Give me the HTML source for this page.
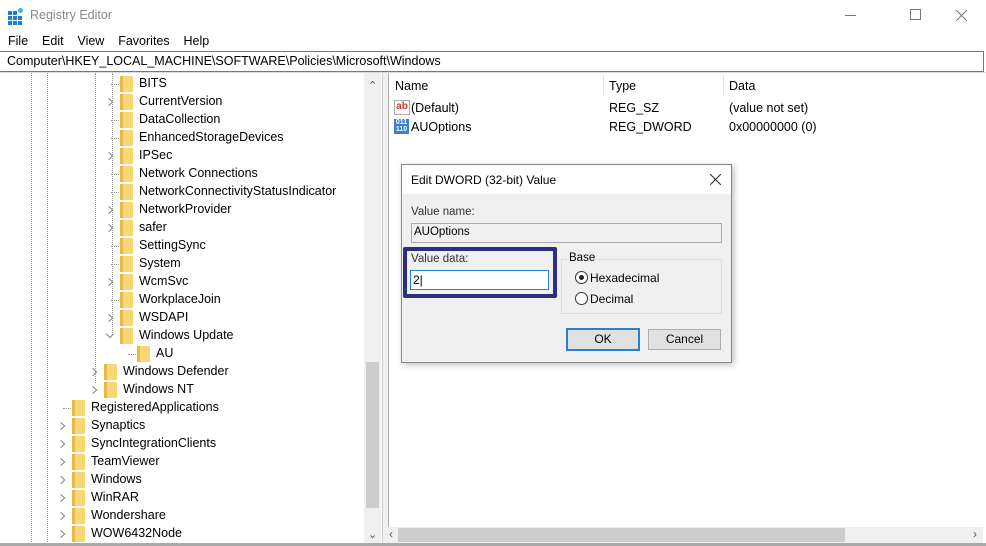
<!DOCTYPE html><html><head><style>
body{margin:0;width:986px;height:546px;overflow:hidden;background:#fff;font-family:"Liberation Sans",sans-serif;font-size:12px;color:#000;position:relative}
.a{position:absolute;white-space:nowrap}
.f{position:absolute;width:13px;height:16px;background:#f8d775;border-radius:1px}
.f:before{content:"";position:absolute;left:0;top:0;width:3px;height:16px;background:#e6b94a}
.ch{position:absolute;width:5px;height:5px;border-right:1.3px solid #888;border-bottom:1.3px solid #888;transform:rotate(-45deg)}
.chd{transform:rotate(45deg)}
.vd{position:absolute;border-left:1px dotted #999;width:0}
.hd{position:absolute;border-top:1px dotted #999;height:0;width:8px}
</style></head><body>
<div class="a" style="left:8px;top:8px;width:16px;height:16px">
<div style="position:absolute;left:0;top:3px;width:4px;height:4px;background:#1e7fd0;box-shadow:5px 0 #1e7fd0,0 5px #1e7fd0,5px 5px #1e7fd0,10px 5px #1e7fd0,0 10px #1e7fd0,5px 10px #1e7fd0,10px 10px #1e7fd0"></div>
<div style="position:absolute;left:10px;top:0;width:5px;height:5px;background:#3fb0f0;border-radius:50%"></div></div>
<div class="a" style="left:30px;top:8px;font-size:12.5px;color:#888">Registry Editor</div>
<div class="a" style="left:845px;top:15px;width:11px;border-top:1px solid #777"></div>
<div class="a" style="left:910px;top:9px;width:9px;height:9px;border:1px solid #777"></div>
<svg class="a" style="left:956px;top:10px" width="11" height="11"><path d="M0 0L11 11M11 0L0 11" stroke="#777" stroke-width="1"/></svg>
<div class="a" style="left:8px;top:34px;font-size:12.5px">File&nbsp;&nbsp;&nbsp;&nbsp;Edit&nbsp;&nbsp;&nbsp;&nbsp;View&nbsp;&nbsp;&nbsp;&nbsp;Favorites&nbsp;&nbsp;&nbsp;&nbsp;Help</div>
<div class="a" style="left:0;top:51px;width:983px;height:19px;border:1px solid #777;border-left:none"></div>
<div class="a" style="left:7px;top:54px;font-size:12.5px">Computer\HKEY_LOCAL_MACHINE\SOFTWARE\Policies\Microsoft\Windows</div>
<div class="a" style="left:0;top:72px;width:986px;border-top:1px solid #ddd"></div>
<div class="vd" style="left:31px;top:73px;height:473px"></div>
<div class="vd" style="left:47px;top:73px;height:473px"></div>
<div class="vd" style="left:95px;top:73px;height:310px"></div>
<div class="vd" style="left:112px;top:73px;height:262px"></div>
<div id="tree"></div>
<div class="a" style="left:364px;top:73px;width:17px;height:473px;background:#f0f0f0"></div>
<div class="a" style="left:366px;top:362px;width:13px;height:146px;background:#cdcdcd"></div>
<div class="a" style="left:368px;top:79px;font-size:11px;color:#555">⌃</div>
<div class="a" style="left:368px;top:528px;font-size:11px;color:#555">⌄</div>
<div class="a" style="left:382px;top:73px;width:5px;height:473px;background:#f0f0f0;border-left:1px solid #ccc;border-right:1px solid #aaa"></div>
<div class="a" style="left:395px;top:79px;font-size:12.5px">Name</div>
<div class="a" style="left:603px;top:75px;height:20px;border-left:1px solid #e5e5e5"></div>
<div class="a" style="left:609px;top:79px;font-size:12.5px">Type</div>
<div class="a" style="left:723px;top:75px;height:20px;border-left:1px solid #e5e5e5"></div>
<div class="a" style="left:729px;top:79px;font-size:12.5px">Data</div>
<div class="a" style="left:394px;top:100px;width:14px;height:13px;border:1px solid #aaa;background:#fff;color:#c33;font-size:10px;font-weight:bold;line-height:12px;text-align:center">ab</div>
<div class="a" style="left:411px;top:101px;font-size:12.5px">(Default)</div>
<div class="a" style="left:609px;top:101px;font-size:12.5px">REG_SZ</div>
<div class="a" style="left:729px;top:101px;font-size:12.5px">(value not set)</div>
<div class="a" style="left:394px;top:119px;width:15px;height:15px;background:#3a7fd0;color:#fff;font-size:7px;line-height:7px;text-align:center;font-weight:bold">011<br>110</div>
<div class="a" style="left:411px;top:120px;font-size:12.5px">AUOptions</div>
<div class="a" style="left:609px;top:120px;font-size:12.5px">REG_DWORD</div>
<div class="a" style="left:729px;top:120px;font-size:12.5px">0x00000000 (0)</div>
<div class="a" style="left:386px;top:527px;width:597px;height:16px;background:#f0f0f0"></div>
<div class="a" style="left:398px;top:528px;width:447px;height:14px;background:#cdcdcd"></div>
<div class="a" style="left:389px;top:527px;font-size:12px;color:#555">‹</div>
<div class="a" style="left:973px;top:527px;font-size:12px;color:#555">›</div>
<div class="a" style="left:0;top:543px;width:986px;height:3px;background:#aaa"></div>
<div class="a" style="left:401px;top:164px;width:329px;height:197px;border:1px solid #888;background:#f0f0f0;box-shadow:2px 2px 6px rgba(0,0,0,.25)"></div>
<div class="a" style="left:402px;top:165px;width:329px;height:29px;background:#fff"></div>
<div class="a" style="left:411px;top:173px;font-size:12px">Edit DWORD (32-bit) Value</div>
<svg class="a" style="left:710px;top:174px" width="11" height="11"><path d="M0 0L11 11M11 0L0 11" stroke="#333" stroke-width="1.1"/></svg>
<div class="a" style="left:411px;top:206px;font-size:11.5px;color:#333">Value name:</div>
<div class="a" style="left:411px;top:223px;width:309px;height:18px;border:1px solid #aaa;background:#f0f0f0"></div>
<div class="a" style="left:414px;top:226px;font-size:11.5px">AUOptions</div>
<div class="a" style="left:403px;top:247px;width:146px;height:43px;border:4px solid #2b2f7e;border-radius:2px"></div>
<div class="a" style="left:411px;top:253px;font-size:11.5px;color:#333">Value data:</div>
<div class="a" style="left:410px;top:270px;width:137px;height:18px;border:1px solid #2a7fd0;background:#fff"></div>
<div class="a" style="left:413px;top:273px;font-size:12px">2|</div>
<div class="a" style="left:561px;top:259px;width:159px;height:53px;border:1px solid #ddd"></div>
<div class="a" style="left:568px;top:252px;font-size:11.5px;background:#f0f0f0;padding:0 1px">Base</div>
<div class="a" style="left:575px;top:271px;width:11px;height:11px;border:1px solid #333;border-radius:50%;background:#fff"></div>
<div class="a" style="left:579px;top:275px;width:5px;height:5px;border-radius:50%;background:#222"></div>
<div class="a" style="left:590px;top:271px;font-size:12px">Hexadecimal</div>
<div class="a" style="left:575px;top:292px;width:11px;height:11px;border:1px solid #333;border-radius:50%;background:#fff"></div>
<div class="a" style="left:590px;top:292px;font-size:12px">Decimal</div>
<div class="a" style="left:566px;top:328px;width:70px;height:19px;border:2px solid #2a7fd0;background:#e1e1e1;text-align:center;line-height:19px;font-size:12px">OK</div>
<div class="a" style="left:648px;top:329px;width:71px;height:19px;border:1px solid #adadad;background:#e1e1e1;text-align:center;line-height:19px;font-size:12px">Cancel</div>
<script>
var items=[["BITS",2,0],["CurrentVersion",2,1],["DataCollection",2,0],["EnhancedStorageDevices",2,0],["IPSec",2,1],["Network Connections",2,0],["NetworkConnectivityStatusIndicator",2,0],["NetworkProvider",2,1],["safer",2,1],["SettingSync",2,0],["System",2,0],["WcmSvc",2,1],["WorkplaceJoin",2,0],["WSDAPI",2,1],["Windows Update",2,2],["AU",3,0],["Windows Defender",1,1],["Windows NT",1,1],["RegisteredApplications",0,0],["Synaptics",0,1],["SyncIntegrationClients",0,1],["TeamViewer",0,1],["Windows",0,1],["WinRAR",0,1],["Wondershare",0,1],["WOW6432Node",0,1]];
var fx=[72,104,120,137],h="";
items.forEach(function(it,i){var y=76+i*18,x=fx[it[1]];
h+='<div class="f" style="left:'+x+'px;top:'+(y)+'px"></div><div class="a" style="left:'+(x+19)+'px;top:'+(y+0)+'px;font-size:12.5px">'+it[0]+'</div>';
if(it[2]==1)h+='<div class="ch" style="left:'+(x-14)+'px;top:'+(y+5)+'px"></div>';
else if(it[2]==2)h+='<div class="ch chd" style="left:'+(x-13)+'px;top:'+(y+3)+'px"></div>';
else h+='<div class="hd" style="left:'+(x-9)+'px;top:'+(y+8)+'px"></div>';});
document.getElementById("tree").innerHTML=h;
</script>
</body></html>
